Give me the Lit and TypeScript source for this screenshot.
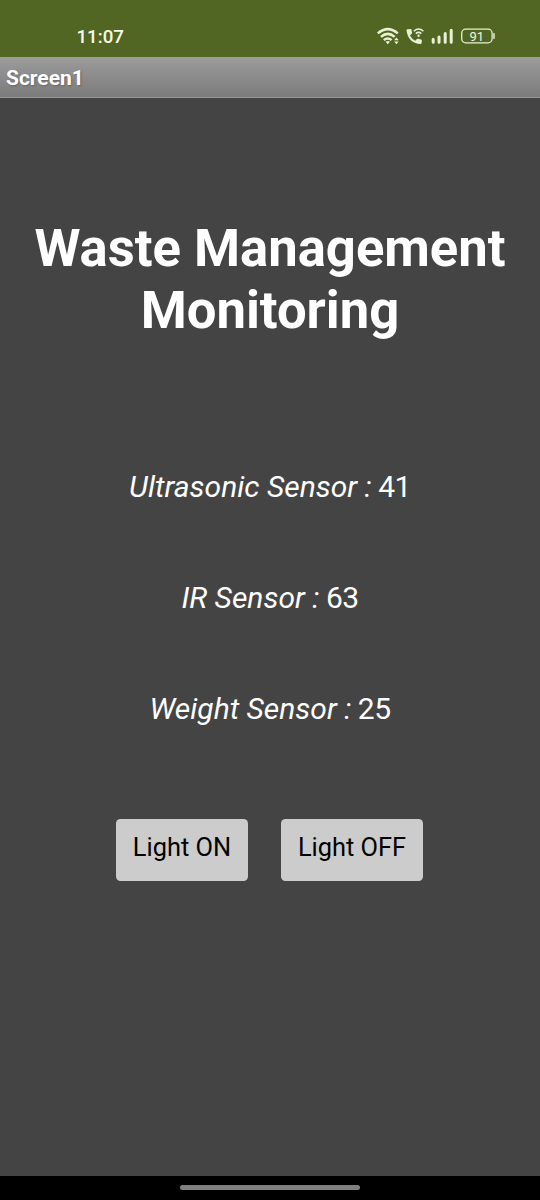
import { LitElement, html, css } from "lit";
import { customElement } from "lit/decorators.js";

@customElement("app-root")
export class AppRoot extends LitElement {
  static styles = css`
    :host { display: flex; flex-direction: column; height: 1200px; width: 540px; background: #444; color: #fff; font-family: Roboto, sans-serif; overflow: hidden; }
    .status { height: 57px; box-sizing: border-box; background: #526623; display: flex; align-items: flex-start; padding: 24px 42px 0 76.5px; justify-content: space-between; }
    .time { font-size: 18.7px; line-height: 26px; font-weight: 500; color: #f6faea; }
    .icons { display: block; }
    .pct { font-size: 13px; font-weight: 400; }
    .bar { height: 41px; box-sizing: border-box; background: linear-gradient(#9c9c9c, #7b7b7b); border-bottom: 1px solid #999; padding-left: 6px; font-size: 21px; line-height: 42px; font-weight: 700; text-shadow: 1px 1px 2px #666; }
    main { flex: 1; display: flex; flex-direction: column; align-items: center; }
    h1 { margin: 120px 0 0; font-size: 52.6px; line-height: 61.5px; font-weight: 700; text-align: center; white-space: nowrap; }
    .sensors { margin-top: 128px; display: grid; gap: 75px; justify-items: center; font-size: 30px; line-height: 36px; }
    .value { letter-spacing: -0.5px; margin-left: -1px; }
    .buttons { display: flex; gap: 33px; margin: 92px 1px 0 0; }
    button { font: 25.4px/30px Roboto, sans-serif; color: #000; background: #ccc; border: 0; border-radius: 4.5px; height: 61.5px; width: 132px; padding: 0 0 5px; white-space: nowrap; }
    button.off { width: 142px; }
    .nav { height: 24px; box-sizing: border-box; background: #000; display: flex; align-items: flex-start; justify-content: center; padding-top: 9px; }
    .pill { width: 180px; height: 5px; border-radius: 3px; background: #808080; }
  `;
  render() {
    return html`
      <div class="status">
        <span class="time">11:07</span>
        <svg class="icons" width="124" height="24" viewBox="374 24 124 24" fill="none" stroke="#e9f0d4">
          <g stroke-width="2.5">
            <path d="M377.8 33.4Q387.8 24.8 397.8 33.4" />
            <path d="M380.9 36.9Q387.8 30.8 394.7 36.9" />
            <path d="M383.8 40.1Q387.8 36.8 391.6 40.1" />
          </g>
          <path d="M385.6 41.7Q387.8 40.2 390 41.7L387.8 44.2Z M394.1 40.3L396.4 37.6L398.7 40.3Z M394.1 41.6L396.4 44.3L398.7 41.6Z" fill="#e9f0d4" stroke="none" />
          <path d="M407.3 29.3L410.4 28.9Q411.3 28.9 411.5 29.8L412.1 32.6Q412.2 33.3 411.7 33.8L409.9 35.5Q411.9 39 415.2 40.8L417 39Q417.5 38.5 418.2 38.7L421.1 39.4Q422 39.7 421.9 40.6L421.6 43.3Q421.4 44.2 420.4 44.1Q408.3 43.1 406.5 30.5Q406.3 29.5 407.3 29.3Z" fill="#e9f0d4" stroke="none" />
          <path d="M413.8 31.2Q418.6 26.8 423.4 31.2M415.8 33.6Q418.6 31.2 421.4 33.6" stroke-width="1.5" />
          <circle cx="418.6" cy="35.8" r="1.2" fill="#e9f0d4" stroke="none" />
          <path d="M433.2 39.2V42.3M439 36.9V42.3M445.2 33.6V42.3M451.2 30.2V42.3" stroke-width="3" stroke-linecap="round" />
          <rect x="461.7" y="29.2" width="30.4" height="13.6" rx="4" stroke-width="1.3" />
          <path d="M494 33.8V38.2" stroke-width="1.5" stroke-linecap="round" />
          <text class="pct" x="476.7" y="40.6" text-anchor="middle" fill="#f1f6e2" stroke="none">91</text>
        </svg>
      </div>
      <div class="bar">Screen1</div>
      <main>
        <h1>Waste Management<br />Monitoring</h1>
        <div class="sensors">
          <div><i>Ultrasonic Sensor :</i> <span class="value">41</span></div>
          <div><i>IR Sensor :</i> <span class="value">63</span></div>
          <div><i>Weight Sensor :</i> <span class="value">25</span></div>
        </div>
        <div class="buttons"><button>Light ON</button><button class="off">Light OFF</button></div>
      </main>
      <div class="nav"><div class="pill"></div></div>
    `;
  }
}
